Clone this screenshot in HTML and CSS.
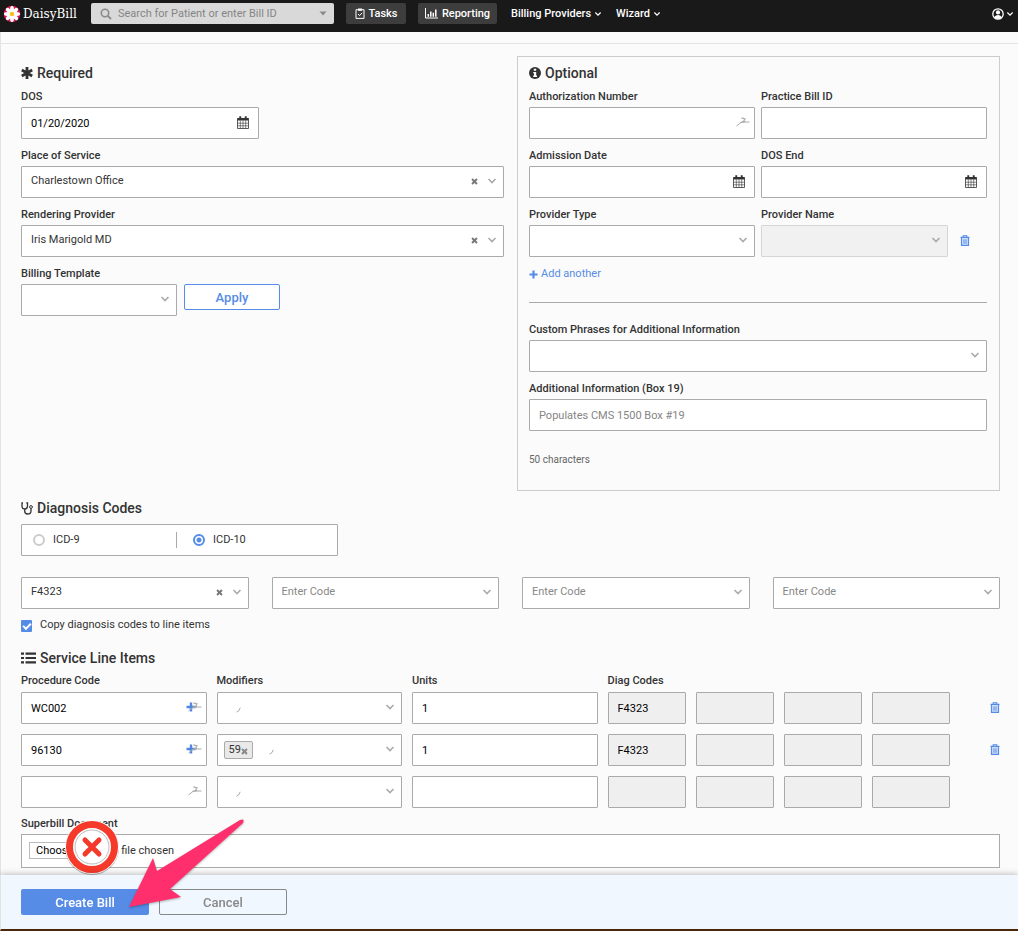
FILE: index.html
```html
<!DOCTYPE html>
<html lang="en">
<head>
  <meta charset="UTF-8">
  <title>DaisyBill - New Bill</title>
  <meta name="viewport" content="width=device-width, initial-scale=1.0">
  <link rel="stylesheet" href="styles.css">
</head>
<body>
  <svg class="sprite" aria-hidden="true">
    <symbol id="chevron" viewBox="0 0 10 8"><path d="M1.5 2 L5 5.5 L8.5 2" fill="none" stroke="currentColor" stroke-width="1.6"/></symbol>
    <symbol id="times" viewBox="0 0 8 8"><path d="M1.2 1.2 L6.8 6.8 M6.8 1.2 L1.2 6.8" stroke="currentColor" stroke-width="2.2"/></symbol>
    <symbol id="plus" viewBox="0 0 10 10"><path d="M5 .5 V9.5 M.5 5 H9.5" stroke="currentColor" stroke-width="2.4"/></symbol>
    <symbol id="calendar" viewBox="0 0 12 13">
      <path d="M.5 2.5 H11.5 V12.5 H.5 Z" fill="#fff" stroke="currentColor" stroke-width=".8"/>
      <path d="M.5 2 H11.5 V4.5 H.5 Z M2.3 .3 H4.2 V3 H2.3 Z M7.8 .3 H9.7 V3 H7.8 Z" fill="currentColor"/>
      <path d="M3.3 4.5 V12.5 M6 4.5 V12.5 M8.7 4.5 V12.5 M.5 7.2 H11.5 M.5 9.8 H11.5" stroke="currentColor" stroke-width=".6"/>
    </symbol>
    <symbol id="trash" viewBox="0 0 10 11">
      <path d="M1.5 3 V10.3 H8.5 V3" fill="#cfe0fa" stroke="currentColor" stroke-width="1.2"/>
      <path d="M.5 2.4 H9.5 M3.2 2.2 V.7 H6.8 V2.2" fill="none" stroke="currentColor" stroke-width="1.1"/>
      <path d="M4 4.3 V8.8 M6 4.3 V8.8" stroke="currentColor"/>
    </symbol>
    <symbol id="wand" viewBox="0 0 14 10">
      <path d="M.5 9 L5.5 5 H13.5" fill="none" stroke="currentColor"/>
      <path d="M5.5 .8 L9 1.8 L7.4 4.8 M4.5 5.5 L9 4.6" fill="none" stroke="currentColor" stroke-width="1.2"/>
    </symbol>
    <symbol id="tick" viewBox="0 0 5 6"><path d="M.5 5.2 Q3.6 4.2 4.2 .8" fill="none" stroke="currentColor"/></symbol>
  </svg>

  <header class="navbar">
    <a class="brand" href="#">
      <svg width="18" height="18" viewBox="0 0 18 18" aria-hidden="true">
        <circle cx="9" cy="9" r="8.3" fill="#d81b51"/>
        <g fill="#fff">
          <ellipse cx="9" cy="4.2" rx="1.9" ry="3.2"/>
          <ellipse cx="9" cy="4.2" rx="1.9" ry="3.2" transform="rotate(45 9 9)"/>
          <ellipse cx="9" cy="4.2" rx="1.9" ry="3.2" transform="rotate(90 9 9)"/>
          <ellipse cx="9" cy="4.2" rx="1.9" ry="3.2" transform="rotate(135 9 9)"/>
          <ellipse cx="9" cy="4.2" rx="1.9" ry="3.2" transform="rotate(180 9 9)"/>
          <ellipse cx="9" cy="4.2" rx="1.9" ry="3.2" transform="rotate(225 9 9)"/>
          <ellipse cx="9" cy="4.2" rx="1.9" ry="3.2" transform="rotate(270 9 9)"/>
          <ellipse cx="9" cy="4.2" rx="1.9" ry="3.2" transform="rotate(315 9 9)"/>
        </g>
        <circle cx="9" cy="9" r="2.2" fill="#f9c21b"/>
      </svg>
      <span>DaisyBill</span>
    </a>
    <div class="search">
      <svg class="search-icon" width="12" height="12" viewBox="0 0 12 12" aria-hidden="true"><circle cx="5" cy="5" r="3.7" fill="none" stroke="currentColor" stroke-width="1.6"/><path d="M7.8 7.8 L11 11" stroke="currentColor" stroke-width="1.8"/></svg>
      <input type="text" aria-label="Search" placeholder="Search for Patient or enter Bill ID">
      <svg class="search-caret" width="8" height="5" viewBox="0 0 8 5" aria-hidden="true"><path d="M.5 .5 H7.5 L4 4.5 Z" fill="currentColor"/></svg>
    </div>
    <nav>
      <a class="nav-btn tasks" href="#">
        <svg width="10" height="11" viewBox="0 0 10 11" aria-hidden="true"><path d="M1 1.7 H9 V10.4 H1 Z" fill="none" stroke="currentColor"/><path d="M3 .5 H7 V2.8 H3 Z" fill="currentColor"/><path d="M3 6 L4.6 7.6 L7.2 4.8" fill="none" stroke="currentColor"/></svg>
        Tasks</a>
      <a class="nav-btn reporting" href="#">
        <svg width="13" height="11" viewBox="0 0 13 11" aria-hidden="true"><path d="M.5 0 V10 H13" fill="none" stroke="currentColor"/><path d="M3.3 6 V8.8 M5.8 3.4 V8.8 M8.3 4.8 V8.8 M10.8 1.6 V8.8" stroke="currentColor" stroke-width="1.5"/></svg>
        Reporting</a>
      <a class="nav-link" href="#">Billing Providers<svg width="8" height="6"><use href="#chevron"/></svg></a>
      <a class="nav-link" href="#">Wizard<svg width="8" height="6"><use href="#chevron"/></svg></a>
    </nav>
    <a class="user" href="#" aria-label="Account">
      <svg width="12" height="12" viewBox="0 0 12 12" aria-hidden="true"><circle cx="6" cy="6" r="5.2" fill="none" stroke="currentColor" stroke-width="1.3"/><circle cx="6" cy="4.4" r="2.1" fill="currentColor"/><path d="M2 9.2 Q6 4.8 10 9.2 Q6 13 2 9.2" fill="currentColor"/></svg>
      <svg width="8" height="6"><use href="#chevron"/></svg>
    </a>
  </header>

  <main>
    <form id="bill-form">
      <div class="columns">
        <section class="required">
          <h2><svg width="12" height="12" viewBox="0 0 12 12" aria-hidden="true"><path d="M6 0 V12 M.8 3 L11.2 9 M11.2 3 L.8 9" stroke="currentColor" stroke-width="2.8"/></svg> Required</h2>
          <div class="field dos">
            <label for="dos">DOS</label>
            <div class="control">
              <input type="text" id="dos" value="01/20/2020">
              <svg class="icon-cal" width="12" height="13"><use href="#calendar"/></svg>
            </div>
          </div>
          <div class="field">
            <label for="place">Place of Service</label>
            <div class="control">
              <select id="place"><option>Charlestown Office</option></select>
              <button type="button" class="clear" aria-label="Clear"><svg width="7" height="7"><use href="#times"/></svg></button>
              <svg class="icon-chev" width="10" height="8"><use href="#chevron"/></svg>
            </div>
          </div>
          <div class="field">
            <label for="provider">Rendering Provider</label>
            <div class="control">
              <select id="provider"><option>Iris Marigold MD</option></select>
              <button type="button" class="clear" aria-label="Clear"><svg width="7" height="7"><use href="#times"/></svg></button>
              <svg class="icon-chev" width="10" height="8"><use href="#chevron"/></svg>
            </div>
          </div>
          <div class="field">
            <label for="template">Billing Template</label>
            <div class="template-row">
              <div class="control">
                <select id="template"><option></option></select>
                <svg class="icon-chev" width="10" height="8"><use href="#chevron"/></svg>
              </div>
              <button type="button" class="btn btn-outline">Apply</button>
            </div>
          </div>
        </section>

        <section class="optional">
          <h2><svg width="12" height="12" viewBox="0 0 12 12" aria-hidden="true"><circle cx="6" cy="6" r="6" fill="currentColor"/><path d="M4.8 1.8 H7.2 V3.8 H4.8 Z M4.2 5 H7.2 V8.6 H8 V10 H4.2 V8.6 H5 V6.3 H4.2 Z" fill="#fff"/></svg> Optional</h2>
          <div class="pair">
            <div class="field">
              <label for="auth">Authorization Number</label>
              <div class="control">
                <input type="text" id="auth">
                <svg class="icon-wand" width="14" height="10"><use href="#wand"/></svg>
              </div>
            </div>
            <div class="field">
              <label for="practice">Practice Bill ID</label>
              <div class="control"><input type="text" id="practice"></div>
            </div>
            <div class="field">
              <label for="admission">Admission Date</label>
              <div class="control">
                <input type="text" id="admission">
                <svg class="icon-cal" width="12" height="13"><use href="#calendar"/></svg>
              </div>
            </div>
            <div class="field">
              <label for="dos-end">DOS End</label>
              <div class="control">
                <input type="text" id="dos-end">
                <svg class="icon-cal" width="12" height="13"><use href="#calendar"/></svg>
              </div>
            </div>
            <div class="field">
              <label for="ptype">Provider Type</label>
              <div class="control">
                <select id="ptype"><option></option></select>
                <svg class="icon-chev" width="10" height="8"><use href="#chevron"/></svg>
              </div>
            </div>
            <div class="field">
              <label for="pname">Provider Name</label>
              <div class="name-row">
                <div class="control">
                  <select id="pname" disabled><option></option></select>
                  <svg class="icon-chev" width="10" height="8"><use href="#chevron"/></svg>
                </div>
                <button type="button" class="trash" aria-label="Remove provider"><svg width="10" height="11"><use href="#trash"/></svg></button>
              </div>
            </div>
          </div>
          <a class="add" href="#"><svg width="9" height="9"><use href="#plus"/></svg> Add another</a>
          <hr>
          <div class="field">
            <label for="phrases">Custom Phrases for Additional Information</label>
            <div class="control">
              <select id="phrases"><option></option></select>
              <svg class="icon-chev" width="10" height="8"><use href="#chevron"/></svg>
            </div>
          </div>
          <div class="field">
            <label for="box19">Additional Information (Box 19)</label>
            <div class="control"><input type="text" id="box19" placeholder="Populates CMS 1500 Box #19"></div>
          </div>
          <p class="hint">50 characters</p>
        </section>
      </div>

      <section class="diagnosis">
        <h2><svg width="12" height="13" viewBox="0 0 12 13" aria-hidden="true"><path d="M2 1 H1 V4 Q1 7 3.7 7 Q6.5 7 6.5 4 V1 H5.3 M3.7 7 V9 Q3.7 12 6.7 12 Q10 12 10 9 V6.5" fill="none" stroke="currentColor" stroke-width="1.3"/><circle cx="10" cy="5" r="1.4" fill="none" stroke="currentColor"/></svg> Diagnosis Codes</h2>
        <div class="icd">
          <label><input type="radio" name="icd"> ICD-9</label>
          <label><input type="radio" name="icd" checked> ICD-10</label>
        </div>
        <div class="codes">
          <div class="control">
            <select aria-label="Diagnosis code 1"><option>F4323</option></select>
            <button type="button" class="clear" aria-label="Clear"><svg width="7" height="7"><use href="#times"/></svg></button>
            <svg class="icon-chev" width="10" height="8"><use href="#chevron"/></svg>
          </div>
          <div class="control">
            <select class="empty" aria-label="Diagnosis code 2"><option>Enter Code</option></select>
            <svg class="icon-chev" width="10" height="8"><use href="#chevron"/></svg>
          </div>
          <div class="control">
            <select class="empty" aria-label="Diagnosis code 3"><option>Enter Code</option></select>
            <svg class="icon-chev" width="10" height="8"><use href="#chevron"/></svg>
          </div>
          <div class="control">
            <select class="empty" aria-label="Diagnosis code 4"><option>Enter Code</option></select>
            <svg class="icon-chev" width="10" height="8"><use href="#chevron"/></svg>
          </div>
        </div>
        <label class="copy"><input type="checkbox" checked> Copy diagnosis codes to line items</label>
      </section>

      <section class="service">
        <h2><svg width="15" height="12" viewBox="0 0 15 12" aria-hidden="true"><path d="M0 1.7 H3 M0 6 H3 M0 10.3 H3 M4.5 1.7 H15 M4.5 6 H15 M4.5 10.3 H15" stroke="currentColor" stroke-width="2.2"/></svg> Service Line Items</h2>
        <div class="lines">
          <label for="proc1">Procedure Code</label>
          <label for="mod1">Modifiers</label>
          <label for="units1">Units</label>
          <label for="diag1">Diag Codes</label>
          <span></span>

          <div class="control">
            <input type="text" id="proc1" value="WC002">
            <svg class="icon-plus" width="10" height="10"><use href="#plus"/></svg>
            <svg class="icon-wand" width="14" height="10"><use href="#wand"/></svg>
          </div>
          <div class="control">
            <select id="mod1"><option></option></select>
            <span class="tags"><svg width="5" height="6"><use href="#tick"/></svg></span>
            <svg class="icon-chev" width="10" height="8"><use href="#chevron"/></svg>
          </div>
          <div class="control"><input type="text" id="units1" value="1"></div>
          <div class="diag">
            <input type="text" id="diag1" value="F4323" readonly>
            <input type="text" aria-label="Diag code" readonly>
            <input type="text" aria-label="Diag code" readonly>
            <input type="text" aria-label="Diag code" readonly>
          </div>
          <button type="button" class="trash" aria-label="Remove line"><svg width="10" height="11"><use href="#trash"/></svg></button>

          <div class="control">
            <input type="text" aria-label="Procedure code" value="96130">
            <svg class="icon-plus" width="10" height="10"><use href="#plus"/></svg>
            <svg class="icon-wand" width="14" height="10"><use href="#wand"/></svg>
          </div>
          <div class="control">
            <select aria-label="Modifiers"><option></option></select>
            <span class="tags"><span class="tag">59<svg width="7" height="7"><use href="#times"/></svg></span><svg width="5" height="6"><use href="#tick"/></svg></span>
            <svg class="icon-chev" width="10" height="8"><use href="#chevron"/></svg>
          </div>
          <div class="control"><input type="text" aria-label="Units" value="1"></div>
          <div class="diag">
            <input type="text" aria-label="Diag code" value="F4323" readonly>
            <input type="text" aria-label="Diag code" readonly>
            <input type="text" aria-label="Diag code" readonly>
            <input type="text" aria-label="Diag code" readonly>
          </div>
          <button type="button" class="trash" aria-label="Remove line"><svg width="10" height="11"><use href="#trash"/></svg></button>

          <div class="control">
            <input type="text" aria-label="Procedure code">
            <svg class="icon-wand" width="14" height="10"><use href="#wand"/></svg>
          </div>
          <div class="control">
            <select aria-label="Modifiers"><option></option></select>
            <span class="tags"><svg width="5" height="6"><use href="#tick"/></svg></span>
            <svg class="icon-chev" width="10" height="8"><use href="#chevron"/></svg>
          </div>
          <div class="control"><input type="text" aria-label="Units"></div>
          <div class="diag">
            <input type="text" aria-label="Diag code" readonly>
            <input type="text" aria-label="Diag code" readonly>
            <input type="text" aria-label="Diag code" readonly>
            <input type="text" aria-label="Diag code" readonly>
          </div>
          <span></span>
        </div>
      </section>

      <section class="superbill">
        <label for="superbill">Superbill Document</label>
        <input type="file" id="superbill">
        <!-- error marker -->
        <svg class="marker" width="60" height="60" viewBox="0 0 60 60" aria-hidden="true">
          <circle cx="30" cy="31" r="27" fill="#000" opacity=".3"/>
          <circle cx="30" cy="30" r="27" fill="#fff"/>
          <circle cx="30" cy="30" r="22.5" fill="none" stroke="#f53a2b" stroke-width="7"/>
          <circle cx="30" cy="30" r="17" fill="none" stroke="#bbb" stroke-width="1"/>
          <path d="M23 23 L37 37 M37 23 L23 37" stroke="#f53a2b" stroke-width="5" stroke-linecap="round"/>
        </svg>
      </section>
    </form>
  </main>

  <footer>
    <button type="submit" form="bill-form" class="btn btn-primary">Create Bill</button>
    <button type="button" class="btn btn-cancel">Cancel</button>
    <svg class="arrow" width="124" height="98" viewBox="0 0 124 98" aria-hidden="true">
      <path d="M4 91 L28 42 L32 55 L115 4 Q120 2 118 7 L45 73 L56 81 Z" fill="#ff2f6d"/>
    </svg>
  </footer>
</body>
</html>
```
FILE: styles.css
```css
* {
  box-sizing: border-box;
}

body {
  margin: 0;
  font-family: Roboto, "Open Sans", sans-serif;
  font-size: 11px;
  line-height: 16px;
  color: #333;
  background: #fbfbfb;
}

input, select, button {
  font-family: inherit;
  font-size: 11px;
}

svg {
  display: block;
  flex: none;
}

.sprite {
  position: absolute;
  width: 0;
  height: 0;
}

/* top bar */
.navbar {
  display: flex;
  align-items: flex-start;
  height: 32px;
  padding: 3px 4px 0;
  background: #191919;
  color: #fff;
}

.navbar a {
  color: #fff;
  text-decoration: none;
}

.brand {
  display: flex;
  align-items: center;
  gap: 2px;
  width: 87px;
  height: 21px;
  margin-left: -1px;
  font-family: "DejaVu Serif", serif;
  font-size: 12px;
}

.search {
  position: relative;
  width: 243px;
  margin-left: 1px;
  color: #8a8a8a;
}

.search input {
  display: block;
  width: 100%;
  height: 21px;
  padding: 0 27px;
  border: none;
  border-radius: 2px;
  background: #d9d9d9;
}

.search-icon {
  position: absolute;
  left: 9px;
  top: 5px;
}

.search-caret {
  position: absolute;
  right: 7px;
  top: 8px;
}

nav {
  display: flex;
  font-weight: 500;
  line-height: 21px;
}

.nav-btn {
  display: flex;
  align-items: center;
  justify-content: center;
  gap: 4px;
  margin-left: 12px;
  border-radius: 2px;
  background: #3d3d3d;
}

.tasks {
  width: 60px;
}

.reporting {
  width: 79px;
}

.nav-link {
  display: flex;
  align-items: center;
  gap: 3px;
  margin-left: 14px;
}

.user {
  display: flex;
  align-items: center;
  gap: 2px;
  height: 21px;
  margin-left: auto;
}

/* page */
main {
  padding-top: 11px;
  border-left: 1px solid #e3e3e3;
}

form {
  padding: 12px 18px 62px 20px;
  border-top: 1px solid #e3e3e3;
}

h2 {
  display: flex;
  align-items: center;
  gap: 4px;
  margin: 0;
  font-size: 14px;
  line-height: 20px;
  font-weight: 500;
}

label {
  display: block;
  font-weight: 500;
}

.columns {
  display: grid;
  grid-template-columns: 1fr 1fr;
  gap: 13px;
}

.required {
  padding-top: 7px;
}

.optional {
  padding: 6px 12px 22px 11px;
  border: 1px solid #ccc;
}

.required h2, .optional h2 {
  margin-bottom: 6px;
}

.field {
  margin-bottom: 9px;
}

.field label {
  margin-bottom: 2px;
}

.dos {
  width: 238px;
}

.control {
  position: relative;
}

input[type="text"], select {
  display: block;
  width: 100%;
}

.control input, .control select, .diag input {
  height: 32px;
  padding: 0 9px;
  border: 1px solid #aaa;
  border-radius: 1px;
  background: #fff;
  color: #000;
}

.control select {
  appearance: none;
  padding-bottom: 3px;
  color: #333;
  opacity: 1;
}

.control select:disabled {
  border-color: #d5d5d5;
  background: #f1f1f1;
}

.control .empty {
  color: #888;
}

::placeholder {
  color: #858585;
}

.icon-chev, .icon-cal, .icon-wand, .icon-plus, .clear {
  position: absolute;
  pointer-events: none;
}

.icon-chev {
  right: 7px;
  top: 11px;
  color: #aaa;
}

.icon-cal {
  right: 10px;
  top: 9px;
}

.icon-wand {
  right: 5px;
  top: 10px;
  color: #aaa;
}

.icon-plus {
  right: 11px;
  top: 10px;
  color: #4f87e3;
}

.clear {
  right: 26px;
  top: 12px;
  padding: 0;
  border: none;
  background: none;
  color: #777;
}

.template-row {
  display: flex;
  gap: 7px;
}

.template-row .control {
  width: 156px;
}

.btn {
  height: 26px;
  border-radius: 2px;
  font-size: 13px;
  font-weight: 500;
}

.btn-outline {
  width: 96px;
  border: 1px solid #568ce6;
  background: #fff;
  color: #568ce6;
}

.pair {
  display: grid;
  grid-template-columns: 1fr 1fr;
  column-gap: 6px;
}

.name-row {
  display: flex;
  align-items: center;
}

.name-row .control {
  flex: 1;
}

.name-row .trash {
  margin: 0 17px 0 12px;
}

.trash {
  padding: 0 0 2px;
  border: none;
  background: none;
  color: #568ce6;
}

.add {
  display: flex;
  align-items: center;
  gap: 3px;
  color: #568ce6;
  text-decoration: none;
}

hr {
  margin: 20px 0 19px;
  border: none;
  border-top: 1px solid #aaa;
}

.hint {
  margin: 21px 0 0;
  font-size: 10px;
  color: #666;
}

/* diagnosis codes */
.diagnosis {
  padding-top: 7px;
}

.icd {
  display: flex;
  align-items: center;
  width: 317px;
  height: 32px;
  margin: 6px 0 21px;
  border: 1px solid #aaa;
  border-radius: 1px;
  background: #fff;
}

.icd label {
  display: flex;
  align-items: center;
  gap: 8px;
  width: 154px;
  padding-left: 11px;
  font-weight: 400;
}

.icd label + label {
  padding-left: 16px;
  border-left: 1px solid #aaa;
}

.icd input {
  appearance: none;
  width: 12px;
  height: 12px;
  margin: 0;
  border: 2px solid #ccc;
  border-radius: 50%;
}

.icd input:checked {
  border-color: #568ce6;
  background: radial-gradient(#568ce6 0 2px, #fff 3px);
}

.codes {
  display: grid;
  grid-template-columns: repeat(4, 1fr);
  gap: 23px;
}

.copy {
  display: flex;
  align-items: center;
  gap: 8px;
  margin-top: 8px;
  font-weight: 400;
}

.copy input {
  appearance: none;
  width: 11px;
  height: 12px;
  margin: 2px 0 0;
  border-radius: 1px;
  background: #568ce6;
}

.copy input:checked::before {
  content: "";
  display: block;
  width: 6px;
  height: 3px;
  margin: 3px 0 0 2px;
  border: solid #fff;
  border-width: 0 0 2px 2px;
  transform: rotate(-45deg);
}

/* service lines */
.service {
  padding-top: 15px;
}

.lines {
  display: grid;
  grid-template-columns: 13fr 13fr 13fr 24fr 40px;
  column-gap: 10px;
  row-gap: 10px;
  margin-top: 5px;
}

.lines label {
  margin-bottom: -7px;
}

.diag {
  display: grid;
  grid-template-columns: repeat(4, 1fr);
  gap: 10px;
}

.diag input {
  background: #efefef;
}

.lines .trash {
  justify-self: end;
}

.tags {
  position: absolute;
  left: 7px;
  top: 7px;
  display: flex;
  align-items: center;
  gap: 16px;
  height: 18px;
  color: #aaa;
}

.tags > svg {
  margin-top: 3px;
}

.tags > svg:first-child {
  margin-left: 12px;
}

.tag {
  display: flex;
  align-items: center;
  height: 18px;
  padding: 0 4px;
  border: 1px solid #aaa;
  border-radius: 2px;
  background: #e9e9e9;
  color: #333;
}

.tag svg {
  margin-top: 3px;
  color: #888;
}

/* superbill upload */
.superbill {
  position: relative;
  padding-top: 8px;
}

.superbill input {
  display: block;
  width: 100%;
  height: 34px;
  margin-top: 2px;
  padding: 7px;
  border: 1px solid #aaa;
  background: #fff;
}

.superbill input::file-selector-button {
  height: 17px;
  margin: 0 4px 0 0;
  padding: 0 6px;
  border: 1px solid #bbb;
  background: #fff;
  font: inherit;
}

.marker {
  position: absolute;
  left: 41px;
  top: 9px;
}

/* bottom bar */
footer {
  position: fixed;
  left: 0;
  right: 0;
  bottom: 0;
  display: flex;
  gap: 10px;
  padding: 14px 20px;
  border-left: 1px solid #e3e3e3;
  border-bottom: 2px solid #4a2708;
  background: #f0f7fe;
  box-shadow: 0 -1px 6px rgba(0, 0, 0, 0.25);
}

footer .btn {
  width: 128px;
}

.btn-primary {
  border: none;
  background: #568ce6;
  color: #fff;
}

.btn-cancel {
  border: 1px solid #888;
  background: #f0f7fe;
  color: #888;
}

.arrow {
  position: absolute;
  left: 124px;
  top: -59px;
  filter: drop-shadow(0 1px 1px rgba(0, 0, 0, 0.3));
}
```
